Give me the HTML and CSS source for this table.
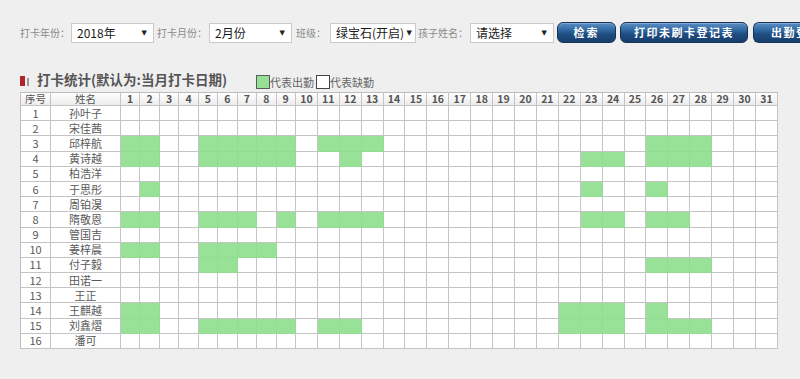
FILE: index.html
```html
<!DOCTYPE html>
<html lang="zh-CN">
<head>
<meta charset="utf-8">
<title>打卡统计</title>
<link rel="stylesheet" href="styles.css">
</head>
<body>
<div class="toolbar">
  <span class="lbl lbl-first">打卡年份：</span>
  <div class="sel"><span>2018年</span><span class="arr">▼</span></div>
  <span class="lbl">打卡月份：</span>
  <div class="sel"><span>2月份</span><span class="arr">▼</span></div>
  <span class="lbl lbl-short">班级：</span>
  <div class="sel sel-wide"><span>绿宝石(开启)</span><span class="arr">▼</span></div>
  <span class="lbl lbl-tight">孩子姓名：</span>
  <div class="sel sel-mid"><span>请选择</span><span class="arr">▼</span></div>
  <button class="btn btn-search">检索</button>
  <button class="btn btn-print">打印未刷卡登记表</button>
  <button class="btn btn-more">出勤登</button>
</div>

<div class="stat-head">
  <h2 class="title"><span class="ico"><i class="ico-red"></i><i class="ico-gray"></i></span>打卡统计(默认为:当月打卡日期)</h2>
  <span class="legend"><i class="box box-green"></i>代表出勤<i class="box"></i>代表缺勤</span>
</div>

<table class="grid">
<colgroup>
<col class="c-no"><col class="c-name">
<col class="c-d1"><col class="c-d1"><col class="c-d1"><col class="c-d1"><col class="c-d1"><col class="c-d1"><col class="c-d1"><col class="c-d1"><col class="c-d1">
<col class="c-d2"><col class="c-d2"><col class="c-d2"><col class="c-d2"><col class="c-d2"><col class="c-d2"><col class="c-d2"><col class="c-d2"><col class="c-d2"><col class="c-d2"><col class="c-d2">
<col class="c-d2"><col class="c-d2"><col class="c-d2"><col class="c-d2"><col class="c-d2"><col class="c-d2"><col class="c-d2"><col class="c-d2"><col class="c-d2"><col class="c-d2"><col class="c-d2">
</colgroup>
<thead>
<tr class="hrow"><th class="th-cjk">序号</th><th class="th-cjk">姓名</th><th>1</th><th>2</th><th>3</th><th>4</th><th>5</th><th>6</th><th>7</th><th>8</th><th>9</th><th>10</th><th>11</th><th>12</th><th>13</th><th>14</th><th>15</th><th>16</th><th>17</th><th>18</th><th>19</th><th>20</th><th>21</th><th>22</th><th>23</th><th>24</th><th>25</th><th>26</th><th>27</th><th>28</th><th>29</th><th>30</th><th>31</th></tr>
</thead>
<tbody>
<tr><td>1</td><td>孙叶子</td><td></td><td></td><td></td><td></td><td></td><td></td><td></td><td></td><td></td><td></td><td></td><td></td><td></td><td></td><td></td><td></td><td></td><td></td><td></td><td></td><td></td><td></td><td></td><td></td><td></td><td></td><td></td><td></td><td></td><td></td><td></td></tr>
<tr><td>2</td><td>宋佳茜</td><td></td><td></td><td></td><td></td><td></td><td></td><td></td><td></td><td></td><td></td><td></td><td></td><td></td><td></td><td></td><td></td><td></td><td></td><td></td><td></td><td></td><td></td><td></td><td></td><td></td><td></td><td></td><td></td><td></td><td></td><td></td></tr>
<tr><td>3</td><td>邱梓航</td><td class="g"></td><td class="g"></td><td></td><td></td><td class="g"></td><td class="g"></td><td class="g"></td><td class="g"></td><td class="g"></td><td></td><td class="g"></td><td class="g"></td><td class="g"></td><td></td><td></td><td></td><td></td><td></td><td></td><td></td><td></td><td></td><td></td><td></td><td></td><td class="g"></td><td class="g"></td><td class="g"></td><td></td><td></td><td></td></tr>
<tr><td>4</td><td>黄诗越</td><td class="g"></td><td class="g"></td><td></td><td></td><td class="g"></td><td class="g"></td><td class="g"></td><td class="g"></td><td class="g"></td><td></td><td></td><td class="g"></td><td></td><td></td><td></td><td></td><td></td><td></td><td></td><td></td><td></td><td></td><td class="g"></td><td class="g"></td><td></td><td class="g"></td><td class="g"></td><td class="g"></td><td></td><td></td><td></td></tr>
<tr><td>5</td><td>柏浩洋</td><td></td><td></td><td></td><td></td><td></td><td></td><td></td><td></td><td></td><td></td><td></td><td></td><td></td><td></td><td></td><td></td><td></td><td></td><td></td><td></td><td></td><td></td><td></td><td></td><td></td><td></td><td></td><td></td><td></td><td></td><td></td></tr>
<tr><td>6</td><td>于思彤</td><td></td><td class="g"></td><td></td><td></td><td></td><td></td><td></td><td></td><td></td><td></td><td></td><td></td><td></td><td></td><td></td><td></td><td></td><td></td><td></td><td></td><td></td><td></td><td class="g"></td><td></td><td></td><td class="g"></td><td></td><td></td><td></td><td></td><td></td></tr>
<tr><td>7</td><td>周铂淏</td><td></td><td></td><td></td><td></td><td></td><td></td><td></td><td></td><td></td><td></td><td></td><td></td><td></td><td></td><td></td><td></td><td></td><td></td><td></td><td></td><td></td><td></td><td></td><td></td><td></td><td></td><td></td><td></td><td></td><td></td><td></td></tr>
<tr><td>8</td><td>隋敬恩</td><td class="g"></td><td class="g"></td><td></td><td></td><td class="g"></td><td class="g"></td><td class="g"></td><td></td><td class="g"></td><td></td><td class="g"></td><td class="g"></td><td class="g"></td><td></td><td></td><td></td><td></td><td></td><td></td><td></td><td></td><td></td><td class="g"></td><td class="g"></td><td></td><td class="g"></td><td class="g"></td><td></td><td></td><td></td><td></td></tr>
<tr><td>9</td><td>管国吉</td><td></td><td></td><td></td><td></td><td></td><td></td><td></td><td></td><td></td><td></td><td></td><td></td><td></td><td></td><td></td><td></td><td></td><td></td><td></td><td></td><td></td><td></td><td></td><td></td><td></td><td></td><td></td><td></td><td></td><td></td><td></td></tr>
<tr><td>10</td><td>姜梓晨</td><td class="g"></td><td class="g"></td><td></td><td></td><td class="g"></td><td class="g"></td><td class="g"></td><td class="g"></td><td></td><td></td><td></td><td></td><td></td><td></td><td></td><td></td><td></td><td></td><td></td><td></td><td></td><td></td><td></td><td></td><td></td><td></td><td></td><td></td><td></td><td></td><td></td></tr>
<tr><td>11</td><td>付子毅</td><td></td><td></td><td></td><td></td><td class="g"></td><td class="g"></td><td></td><td></td><td></td><td></td><td></td><td></td><td></td><td></td><td></td><td></td><td></td><td></td><td></td><td></td><td></td><td></td><td></td><td></td><td></td><td class="g"></td><td class="g"></td><td class="g"></td><td></td><td></td><td></td></tr>
<tr><td>12</td><td>田诺一</td><td></td><td></td><td></td><td></td><td></td><td></td><td></td><td></td><td></td><td></td><td></td><td></td><td></td><td></td><td></td><td></td><td></td><td></td><td></td><td></td><td></td><td></td><td></td><td></td><td></td><td></td><td></td><td></td><td></td><td></td><td></td></tr>
<tr><td>13</td><td>王正</td><td></td><td></td><td></td><td></td><td></td><td></td><td></td><td></td><td></td><td></td><td></td><td></td><td></td><td></td><td></td><td></td><td></td><td></td><td></td><td></td><td></td><td></td><td></td><td></td><td></td><td></td><td></td><td></td><td></td><td></td><td></td></tr>
<tr><td>14</td><td>王麒越</td><td class="g"></td><td class="g"></td><td></td><td></td><td></td><td></td><td></td><td></td><td></td><td></td><td></td><td></td><td></td><td></td><td></td><td></td><td></td><td></td><td></td><td></td><td></td><td class="g"></td><td class="g"></td><td class="g"></td><td></td><td class="g"></td><td></td><td></td><td></td><td></td><td></td></tr>
<tr><td>15</td><td>刘鑫熠</td><td class="g"></td><td class="g"></td><td></td><td></td><td class="g"></td><td class="g"></td><td class="g"></td><td class="g"></td><td class="g"></td><td></td><td class="g"></td><td class="g"></td><td></td><td></td><td></td><td></td><td></td><td></td><td></td><td></td><td></td><td class="g"></td><td class="g"></td><td class="g"></td><td></td><td class="g"></td><td class="g"></td><td class="g"></td><td></td><td></td><td></td></tr>
<tr><td>16</td><td>潘可</td><td></td><td></td><td></td><td></td><td></td><td></td><td></td><td></td><td></td><td></td><td></td><td></td><td></td><td></td><td></td><td></td><td></td><td></td><td></td><td></td><td></td><td></td><td></td><td></td><td></td><td></td><td></td><td></td><td></td><td></td><td></td></tr>
</tbody>
</table>
</body>
</html>
```

FILE: styles.css
```css
html, body {
  margin: 0;
  padding: 0;
  overflow: hidden;
}

body {
  width: 800px;
  height: 379px;
  background: #efefef;
  font-family: "Noto Sans CJK SC", "Noto Sans", sans-serif;
  color: #555;
}

/* ---------- toolbar ---------- */
.toolbar {
  display: flex;
  align-items: center;
  height: 21px;
  padding: 22px 0 0 20px;
  white-space: nowrap;
}

.lbl {
  flex: none;
  width: 52px;
  margin-left: 3px;
  font-size: 10px;
  line-height: 20px;
  color: #8a8a8a;
}

.lbl-first {
  width: 51px;
  margin-left: 0;
}

.lbl-short {
  width: 34px;
  margin-left: 4px;
}

.lbl-tight {
  margin-left: 2px;
}

.sel {
  flex: none;
  box-sizing: border-box;
  width: 83px;
  height: 20px;
  padding: 0 6px 0 5px;
  display: flex;
  align-items: center;
  justify-content: space-between;
  background: #fff;
  border: 1px solid #cacaca;
  font-size: 12px;
  color: #1a1a1a;
  line-height: 18px;
}

.sel-wide {
  width: 86px;
  padding-right: 3px;
}

.sel-mid {
  width: 84px;
}

.arr {
  font-family: "DejaVu Sans", sans-serif;
  font-size: 7px;
  color: #222;
}

.btn {
  flex: none;
  box-sizing: border-box;
  height: 21px;
  margin-left: 4px;
  padding: 0;
  border: 1px solid #163459;
  border-radius: 6px;
  background: linear-gradient(#5a8fc6 0%, #2f659d 40%, #1f4c80 60%, #173f6c 100%);
  box-shadow: inset 0 1px 0 rgba(255, 255, 255, 0.25);
  color: #fff;
  font-family: "Noto Sans CJK SC", sans-serif;
  font-size: 11px;
  font-weight: bold;
  letter-spacing: 1.5px;
  line-height: 19px;
  text-align: center;
}

.btn-search {
  width: 59px;
  margin-left: 3px;
  letter-spacing: 2px;
}

.btn-print {
  width: 128px;
}

.btn-more {
  width: 47px;
  margin-left: 5px;
  text-align: left;
  padding-left: 17px;
  border-right: none;
  border-radius: 6px 0 0 6px;
}

/* ---------- heading ---------- */
.stat-head {
  display: flex;
  align-items: flex-end;
  height: 19px;
  margin: 27px 0 3px 20px;
}

.title {
  margin: 0;
  display: flex;
  align-items: center;
  font-size: 13.5px;
  font-weight: bold;
  line-height: 19px;
  color: #555;
}

.ico {
  display: flex;
  align-items: flex-end;
  gap: 2px;
  width: 17px;
  height: 10px;
  margin-top: 3px;
}

.ico-red {
  display: block;
  width: 5px;
  height: 10px;
  background: #b1242a;
}

.ico-gray {
  display: block;
  width: 2px;
  height: 8px;
  background: #9a9a9a;
}

.legend {
  display: flex;
  align-items: flex-end;
  margin-left: 29px;
  font-size: 11px;
  line-height: 14px;
  color: #666;
}

.box {
  display: block;
  box-sizing: border-box;
  width: 14px;
  height: 14px;
  border: 1px solid #444;
  background: #fff;
  margin-left: 2px;
}

.box-green {
  margin-left: 0;
  background: #95e095;
  border-color: #5a5a5a;
}

/* ---------- grid ---------- */
.grid {
  width: 758px;
  margin-left: 20px;
  table-layout: fixed;
  border-collapse: separate;
  border-spacing: 0;
  border-top: 1px solid #bdbdbd;
  border-left: 1px solid #bdbdbd;
  background: #fff;
}

.c-no { width: 30px; }
.c-name { width: 70px; }
.c-d1 { width: 19.44px; }
.c-d2 { width: 21.91px; }

.grid th,
.grid td {
  padding: 0;
  border-right: 1px solid #c4c4c4;
  border-bottom: 1px solid #c4c4c4;
  text-align: center;
  white-space: nowrap;
}

.hrow {
  height: 13px;
}

.grid th {
  background: linear-gradient(#ffffff, #ececec);
  font-size: 10.5px;
  font-weight: bold;
  line-height: 12px;
  color: #555;
}

.grid th.th-cjk {
  font-weight: normal;
}

.grid tbody tr {
  height: 15.2px;
}

.grid td {
  font-size: 11px;
  line-height: 13px;
  color: #5a5a5a;
}

.grid td.g {
  background: #98e298;
  border-right-color: #93dc94;
  border-bottom-color: #93dc94;
}
```
